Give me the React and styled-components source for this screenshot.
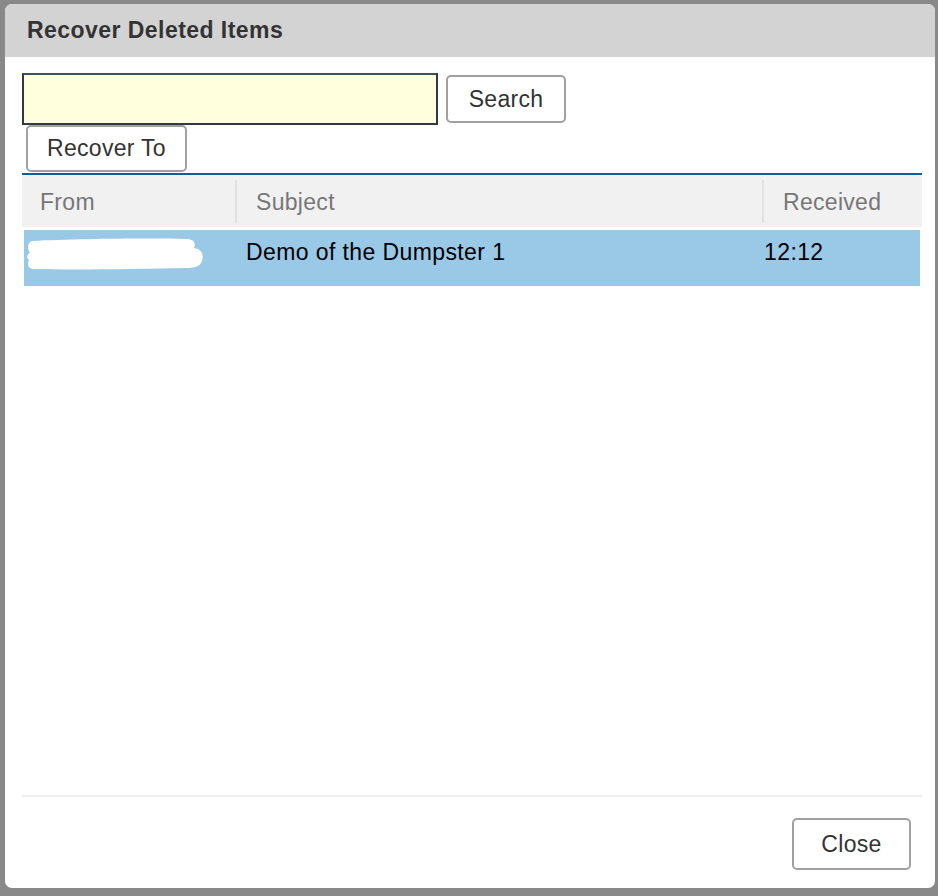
import React from "react";
import styled, { createGlobalStyle } from "styled-components";

const GlobalStyle = createGlobalStyle`
  html, body {
    margin: 0;
    padding: 0;
    background: #898989;
    font-family: "Liberation Sans", Arial, sans-serif;
  }
`;

const Backdrop = styled.div`
  width: 938px;
  height: 896px;
  padding: 4px 0 0 5px;
  box-sizing: border-box;
`;

const Dialog = styled.div`
  width: 930px;
  height: 884px;
  background: #fff;
  border-radius: 7px;
  overflow: hidden;
  display: flex;
  flex-direction: column;
`;

const Header = styled.div`
  height: 53px;
  background: #d3d3d3;
  display: flex;
  align-items: center;
  padding-left: 22px;
  flex-shrink: 0;
`;

const Title = styled.h1`
  margin: 0;
  font-size: 23px;
  font-weight: bold;
  letter-spacing: 0.45px;
  color: #333;
`;

const Body = styled.div`
  flex: 1;
  display: flex;
  flex-direction: column;
  padding: 16px 13px 0 17px;
`;

const SearchRow = styled.div`
  display: flex;
  align-items: center;
  gap: 8px;
`;

const SearchInput = styled.input`
  width: 416px;
  height: 52px;
  box-sizing: border-box;
  background: #ffffdd;
  border: 2px solid #2f3b42;
  border-top-color: #3d4f5a;
  outline: none;
  font-size: 22px;
  padding: 0 8px;
`;

const Button = styled.button`
  height: ${(p) => p.$h || 48}px;
  width: ${(p) => p.$w}px;
  box-sizing: border-box;
  background: #fff;
  border: 2px solid #a0a0a0;
  border-radius: 5px;
  font-family: "Liberation Sans", Arial, sans-serif;
  font-size: 23px;
  letter-spacing: 0.3px;
  color: #333;
  padding: 0;
  cursor: pointer;
`;

const ToolRow = styled.div`
  padding-left: 4px;
  display: flex;
`;

const Table = styled.div`
  flex: 1;
  margin-top: 1px;
  border-top: 2px solid #0d5f97;
  display: flex;
  flex-direction: column;
`;

const HeadRow = styled.div`
  display: grid;
  grid-template-columns: 213px 527px 1fr;
  height: 52px;
  background: #f1f1f1;
`;

const HeadCell = styled.div`
  display: flex;
  align-items: center;
  padding: 3px 0 0 ${(p) => p.$pad}px;
  font-size: 23px;
  letter-spacing: 0.3px;
  color: #777;
  position: relative;
  ${(p) =>
    p.$sep &&
    `
    &::before {
      content: "";
      position: absolute;
      left: 0;
      top: 5px;
      bottom: 4px;
      width: 2px;
      background: #e2e2e2;
    }
  `}
`;

const DataRow = styled.div`
  margin: 3px 2px 0 2px;
  display: grid;
  grid-template-columns: 222px 518px 1fr;
  height: 56px;
  background: #9ac9e8;
`;

const DataCell = styled.div`
  padding-top: 9px;
  line-height: 26px;
  font-size: 23px;
  letter-spacing: 0.4px;
  color: #000;
`;

const Redacted = styled.div`
  padding-top: 7px;
  padding-left: 2px;
`;

const Footer = styled.div`
  border-top: 2px solid #efefef;
  display: flex;
  justify-content: flex-end;
  padding: 21px 11px 18px 0;
`;

export default function App() {
  return (
    <>
      <GlobalStyle />
      <Backdrop>
        <Dialog>
          <Header>
            <Title>Recover Deleted Items</Title>
          </Header>
          <Body>
            <SearchRow>
              <SearchInput type="text" />
              <Button $w={120}>Search</Button>
            </SearchRow>
            <ToolRow>
              <Button $w={161} $h={47}>
                Recover To
              </Button>
            </ToolRow>
            <Table>
              <HeadRow>
                <HeadCell $pad={18}>From</HeadCell>
                <HeadCell $pad={21} $sep>
                  Subject
                </HeadCell>
                <HeadCell $pad={21} $sep>
                  Received
                </HeadCell>
              </HeadRow>
              <DataRow>
                <Redacted>
                  <svg width="178" height="34" viewBox="0 0 178 34">
                    <path
                      d="M6 4 C 50 2, 120 1, 160 2 C 168 2, 170 6, 168 11 C 176 12, 178 18, 176 24 C 174 30, 168 31, 160 31 C 110 32, 50 33, 8 32 C 2 32, 1 27, 3 23 C 0 20, 1 17, 4 16 C 1 12, 1 6, 6 4 Z"
                      fill="#fff"
                    />
                  </svg>
                </Redacted>
                <DataCell>Demo of the Dumpster 1</DataCell>
                <DataCell>12:12</DataCell>
              </DataRow>
            </Table>
            <Footer>
              <Button $w={119} $h={52}>
                Close
              </Button>
            </Footer>
          </Body>
        </Dialog>
      </Backdrop>
    </>
  );
}
